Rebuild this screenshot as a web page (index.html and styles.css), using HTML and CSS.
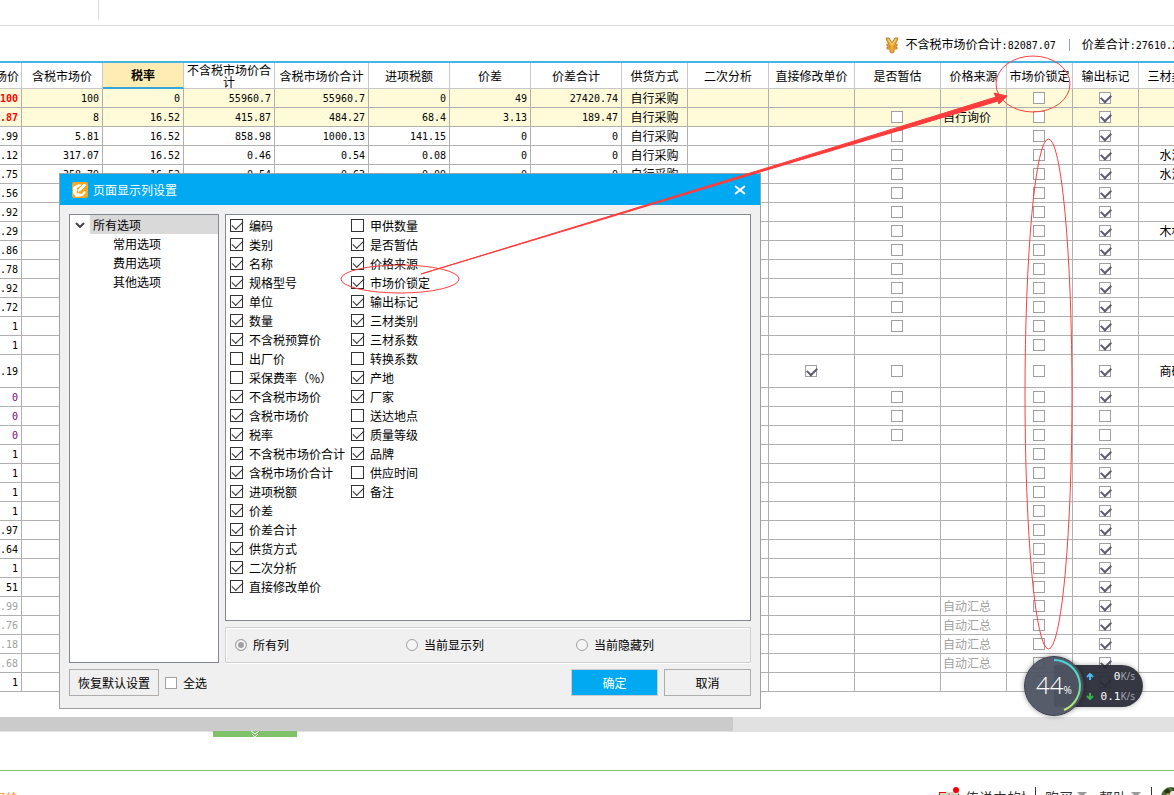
FILE: index.html
```html
<!DOCTYPE html>
<html lang="zh-CN">
<head>
<meta charset="utf-8">
<title>人材机汇总</title>
<link rel="stylesheet" href="styles.css">
</head>
<body>
<div class="app">
  <div class="tabstrip"><span class="tabstrip-divider"></span></div>

  <div class="summary">
    <svg class="coin" viewBox="0 0 14 17" aria-hidden="true">
      <path d="M1 1h3l3 5 3-5h3l-1 3-2 3h2v2H9v1h3v2H9v3l-2 1-2-1v-3H2v-2h3V9H2V7h2L2 4z" fill="#f3a83a" stroke="#c98022" stroke-width="1"/>
      <path d="M3 2l4 6 4-6" fill="none" stroke="#ffe08a" stroke-width="1"/>
    </svg>
    <span>不含税市场价合计<span class="num">:82087.07</span></span>
    <span class="summary-divider"></span>
    <span>价差合计<span class="num">:27610.21</span></span>
  </div>

  <div class="grid-view">
    <table class="grid">
      <colgroup>
        <col class="w81"><col class="w81"><col class="w81"><col class="w91"><col class="w94"><col class="w81"><col class="w81"><col class="w91"><col class="w66"><col class="w81"><col class="w86"><col class="w86"><col class="w66"><col class="w66"><col class="w66"><col class="w66">
      </colgroup>
      <thead>
        <tr>
          <th class="first">不含税市场价</th><th>含税市场价</th><th class="active">税率</th><th>不含税市场价合计</th><th>含税市场价合计</th><th>进项税额</th><th>价差</th><th>价差合计</th><th>供货方式</th><th>二次分析</th><th>直接修改单价</th><th>是否暂估</th><th>价格来源</th><th>市场价锁定</th><th>输出标记</th><th>三材类别</th>
        </tr>
      </thead>
      <tbody id="rows"></tbody>
    </table>
  </div>

  <div class="scrollbar"><div class="scrollbar-thumb"></div></div>
  <button class="expander" type="button" aria-label="展开">
    <svg viewBox="0 0 10 6" aria-hidden="true"><path d="M1 0l4 3 4-3M2 3l3 3 3-3" fill="none" stroke="#fff" stroke-width="1"/></svg>
  </button>

  <footer class="statusbar">
    <a class="inquiry" href="#">询价</a>
    <div class="user-area">
      <svg class="book" viewBox="0 0 20 16" aria-hidden="true">
        <path d="M0 5h9l1 1 1-1h9v11H0z" fill="#d8d3c6"/>
        <path d="M0 5h1v11H0zM19 7h1v9h-1zM0 5h7v1H0z" fill="#f00"/>
        <path d="M10 6v10" stroke="#8f8a80"/>
        <circle cx="17" cy="3" r="3" fill="#f00"/>
      </svg>
      <span class="user-name">传说中的情</span>
      <span class="bar"></span>
      <a class="menu" href="#">购买<span class="caret"></span></a>
      <a class="menu" href="#">帮助<span class="caret"></span></a>
      <span class="bar"></span>
      <svg class="avatar" viewBox="0 0 20 20" aria-hidden="true">
        <circle cx="10" cy="10" r="10" fill="#4f6b35"/>
        <path d="M3 4l4-3 2 4-3 3zM11 1l5 1-2 4zM2 9l4-1 1 4z" fill="#253417"/>
        <circle cx="12" cy="7" r="3" fill="#f0e3dc"/><path d="M9 11h7v8H9z" fill="#e8e2e0"/><circle cx="7" cy="8" r="2" fill="#b98f5a"/>
      </svg>
    </div>
  </footer>
</div>

<section class="dialog" role="dialog" aria-labelledby="dialog-title">
  <header class="dialog-title">
    <svg class="dialog-icon" viewBox="0 0 16 16" aria-hidden="true">
      <rect width="16" height="16" rx="2" fill="#f9a825"/>
      <path d="M1 5l6-3 3 1-5 3v5l5 1 2-3 2 1-3 4-7 1-3-4z" fill="#fff"/>
      <path d="M5 11l1-4 6-6 3 2-6 6z" fill="#fff" stroke="#f9a825" stroke-width="1"/>
    </svg>
    <span id="dialog-title">页面显示列设置</span>
    <button class="close" type="button" aria-label="关闭">
      <svg viewBox="0 0 12 10" aria-hidden="true"><path d="M1 1l10 8M11 1L1 9" stroke="#fff" stroke-width="2"/></svg>
    </button>
  </header>
  <div class="dialog-body">
    <ul class="tree">
      <li>
        <svg class="chevron" viewBox="0 0 10 6" aria-hidden="true"><path d="M1 1l4 4 4-4" fill="none" stroke="#444" stroke-width="2"/></svg>
        <span class="tree-node selected">所有选项</span>
        <ul class="tree-children">
          <li>常用选项</li>
          <li>费用选项</li>
          <li>其他选项</li>
        </ul>
      </li>
    </ul>
    <div class="side">
      <div class="options" id="options"></div>
      <div class="filters">
        <label><input type="radio" name="filter" checked>所有列</label>
        <label><input type="radio" name="filter">当前显示列</label>
        <label><input type="radio" name="filter">当前隐藏列</label>
      </div>
    </div>
  </div>
  <div class="dialog-actions">
    <button class="btn reset" type="button">恢复默认设置</button>
    <label class="select-all"><input class="cell-check" type="checkbox">全选</label>
    <button class="btn primary" type="button">确定</button>
    <button class="btn" type="button">取消</button>
  </div>
</section>

<svg class="marks" width="1174" height="795" viewBox="0 0 1174 795" aria-hidden="true">
  <g fill="none" stroke="#ff4040" stroke-width="1">
    <ellipse cx="1033" cy="84" rx="37" ry="28"/>
    <ellipse cx="1048.500" cy="394" rx="23.500" ry="255"/>
    <ellipse cx="400" cy="279" rx="59" ry="14"/>
  </g>
  <path d="M421 274L760 170 996 97 994 93 1007 96 999 104 998 101 760 172z" fill="#ff3b3b" stroke="#ff3b3b" stroke-width="1"/>
</svg>

<aside class="monitor">
  <div class="gauge">
    <svg class="gauge-arc" viewBox="0 0 60 60" aria-hidden="true">
      <defs><linearGradient id="arc" x1="0" y1="0" x2="0" y2="1"><stop offset="0" stop-color="#45d6e0"/><stop offset=".5" stop-color="#57dfb0"/><stop offset="1" stop-color="#c6e860"/></linearGradient></defs>
      <path d="M30 4a26 26 0 0 1 10 50" fill="none" stroke="url(#arc)" stroke-width="2"/>
    </svg>
    <span class="gauge-value">44</span><span class="gauge-unit">%</span>
  </div>
  <div class="speeds">
    <div class="speed"><svg viewBox="0 0 8 7" aria-hidden="true"><path d="M4 7V2M1 4l3-3 3 3" fill="none" stroke="#4cb8f5" stroke-width="2"/></svg><b>0</b><small>K/s</small></div>
    <div class="speed"><svg viewBox="0 0 8 7" aria-hidden="true"><path d="M4 0v5M1 3l3 3 3-3" fill="none" stroke="#36b54a" stroke-width="2"/></svg><b>0.1</b><small>K/s</small></div>
  </div>
</aside>
<script src="app.js"></script>
</body>
</html>
```
FILE: styles.css
```css
* { box-sizing: border-box; }

body {
  margin: 0;
  height: 100vh;
  overflow: hidden;
  position: relative;
  background: #fff;
  color: #000;
  font: 12px/18px "Noto Sans CJK SC", sans-serif;
}

button, input { font: inherit; margin: 0; }
ul { list-style: none; margin: 0; padding: 0; }
a { color: inherit; text-decoration: none; }

.app { display: flex; flex-direction: column; height: 100%; overflow: hidden; }

.tabstrip { flex: none; height: 26px; padding-left: 98px; border-bottom: 1px solid #dcdcdc; }
.tabstrip-divider { display: block; width: 1px; height: 20px; background: #dcdcdc; }

.summary {
  flex: none;
  display: flex;
  align-items: center;
  justify-content: flex-end;
  height: 35px;
  margin-right: -10px;
  padding-top: 3px;
  white-space: nowrap;
}
.coin { width: 14px; height: 17px; margin-right: 7px; }
.summary-divider { width: 1px; height: 12px; margin: 0 12px 0 13px; background: #8aa0bd; }

.num { font-family: "DejaVu Sans Mono", monospace; font-size: 10px; }

.grid-view { flex: none; overflow: hidden; border-top: 2px solid #45b5e6; }
.grid {
  width: 1264px;
  margin-left: -59px;
  table-layout: fixed;
  border-spacing: 0;
}
.w66 { width: 66px; }
.w81 { width: 81px; }
.w86 { width: 86px; }
.w91 { width: 91px; }
.w94 { width: 94px; }

.grid th {
  height: 26px;
  padding: 0 2px;
  border-right: 1px solid #c8c8c8;
  border-bottom: 1px solid #c8c8c8;
  font-weight: 400;
  line-height: 12px;
}
.grid th.first { text-align: right; }
.grid th:nth-child(14) { white-space: nowrap; }
.grid th.active { background: #ffecb3; border-bottom: 2px solid #35a6dc; font-weight: 700; }

.grid td {
  height: 19px;
  padding: 0 3px;
  border-right: 1px solid #b0b0b0;
  border-bottom: 1px solid #b0b0b0;
  line-height: 18px;
  text-align: center;
  white-space: nowrap;
}
.grid td.num { padding-top: 2px; line-height: 16px; text-align: right; }
.grid td.check { padding-right: 4px; }
.grid td:nth-child(13) { padding-left: 2px; text-align: left; }
.grid tr.tall td { height: 33px; }
.grid tr.lit td { background: #fffbd8; }
.grid tr.lit td:first-child { color: #f00; font-weight: 700; }
.grid tr.zero td { color: #800080; }
.grid tr.auto td { color: #a0a0a0; }

.cell-check {
  appearance: none;
  display: block;
  position: relative;
  width: 12px;
  height: 12px;
  margin: 0 auto;
  border: 1px solid #a0a0a0;
  background: #fff;
}
.cell-check:checked::before, .option input:checked::before {
  content: "";
  position: absolute;
  left: 1px;
  top: 1px;
  width: 8px;
  height: 5px;
  border: solid #5c5c70;
  border-width: 0 0 2px 2px;
  transform: rotate(-45deg);
}

.scrollbar { flex: none; height: 15px; margin-top: 25px; background: #e1e1e1; }
.scrollbar-thumb { width: 62.4%; height: 14px; background: #cbcbcb; }

.expander {
  flex: none;
  display: flex;
  justify-content: center;
  width: 84px;
  height: 6px;
  margin-top: -1px;
  margin-left: 213px;
  padding: 0;
  border: 0;
  background: #80c26a;
}
.expander svg { width: 10px; height: 6px; }

.statusbar {
  flex: none;
  display: flex;
  justify-content: space-between;
  height: 60px;
  margin-top: 33px;
  padding-top: 16px;
  border-top: 1px solid #80c26a;
  color: #333;
  font-size: 14px;
  line-height: 20px;
}
.inquiry { margin-left: -9px; color: #ff9a3c; }
.user-area { display: flex; align-items: flex-start; margin-right: -7px; }
.book { width: 20px; height: 16px; margin-right: 6px; }
.user-name { width: 60px; overflow: hidden; white-space: nowrap; }
.bar { width: 1px; height: 20px; margin: 0 9px 0 10px; background: #333; }
.menu { display: flex; margin-right: 12px; }
.menu:nth-of-type(2) { margin-right: 0; }
.caret { margin: 5px 0 0 4px; border: solid transparent; border-width: 5px 5px 0; border-top-color: #999; height: 0; }
.avatar { width: 20px; height: 20px; }

.dialog {
  position: absolute;
  left: 59px;
  top: 173px;
  width: 702px;
  border: 1px solid #a0a0a0;
  background: #f0f0f0;
}
.dialog-title {
  display: flex;
  align-items: center;
  height: 31px;
  padding: 0 14px 0 12px;
  background: #00a9f2;
  color: #fff;
}
.dialog-icon { width: 16px; height: 16px; margin-right: 5px; }
.close { margin-left: auto; padding: 0; border: 0; background: none; display: flex; }
.close svg { width: 12px; height: 10px; }

.dialog-body { display: grid; grid-template-columns: 150px 1fr; gap: 6px; padding: 9px 9px 6px; }
.tree { min-height: 449px; border: 1px solid #828790; background: #fff; line-height: 19px; }
.tree > li { display: grid; grid-template-columns: 20px 1fr; align-items: center; }
.chevron { width: 10px; height: 6px; margin-left: 5px; }
.tree-node { padding-left: 3px; }
.tree-node.selected { background: #d9d9d9; }
.tree-children { grid-column: 2; padding-left: 23px; }

.side { display: flex; flex-direction: column; gap: 6px; }
.options {
  flex: 1;
  display: grid;
  grid-template-rows: repeat(20, 19px);
  grid-auto-columns: 121px;
  grid-auto-flow: column;
  padding: 1px 4px;
  border: 1px solid #828790;
  background: #fff;
}
.option { display: flex; align-items: center; white-space: nowrap; }
.option input {
  appearance: none;
  flex: none;
  position: relative;
  width: 13px;
  height: 13px;
  margin-right: 6px;
  border: 1px solid #333;
  background: #fff;
}
.option input:checked::before { width: 10px; height: 5px; border-color: #333; border-width: 0 0 1px 1px; }

.filters {
  display: grid;
  grid-template-columns: 171px 170px 1fr;
  height: 36px;
  padding-left: 9px;
  border: 1px solid #d0d0d0;
  box-shadow: inset 1px 1px #fff, 0 1px #fff;
}
.filters label { display: flex; align-items: center; }
.filters input {
  appearance: none;
  width: 12px;
  height: 12px;
  margin-right: 6px;
  border: 1px solid #a0a0a0;
  border-radius: 50%;
  background: #f4f4f4;
}
.filters input:checked { background: #a0a0a0; box-shadow: inset 0 0 0 2px #f4f4f4; }

.dialog-actions { display: flex; gap: 6px; padding: 0 9px 12px; }
.btn { width: 87px; height: 27px; padding: 0; border: 1px solid #adadad; background: #f0f0f0; color: #000; }
.btn.reset { width: 90px; }
.btn.primary { margin-left: auto; border-color: #ccc; background: #00a9f2; color: #fff; }
.select-all { display: flex; align-items: center; gap: 6px; }

.marks { position: absolute; left: 0; top: 0; pointer-events: none; }

.monitor { position: absolute; left: 1024px; top: 656px; display: flex; align-items: center; }
.gauge {
  position: relative;
  z-index: 1;
  display: flex;
  align-items: baseline;
  width: 60px;
  height: 60px;
  padding: 13px 0 0 11px;
  border: 1px solid #3c404a;
  border-radius: 50%;
  background: rgba(78, 83, 98, 0.95);
  box-shadow: 0 0 5px rgba(0, 0, 0, 0.4);
  color: #fff;
  line-height: 30px;
}
.gauge-arc { position: absolute; left: -1px; top: -1px; width: 60px; height: 60px; }
.gauge-value { font-family: "Open Sans", sans-serif; font-size: 24px; font-weight: 300; }
.gauge-unit { font-family: "Open Sans", sans-serif; font-size: 10px; }
.speeds {
  width: 89px;
  margin-left: -30px;
  padding: 1px 8px 1px 32px;
  border-radius: 0 21px 21px 0;
  background: rgba(40, 44, 54, 0.94);
  box-shadow: 0 0 5px rgba(0, 0, 0, 0.3);
  color: #fff;
}
.speed { display: flex; align-items: baseline; height: 20px; line-height: 20px; }
.speed svg { width: 8px; height: 7px; margin-right: auto; }
.speed b { font: 11px/20px "DejaVu Sans Mono", monospace; }
.speed small { font: 10px/20px "Open Sans", sans-serif; color: #a8abb3; }
```
FILE: app.js
```js
// v holds the numeric columns; est, edit and out are check states: 1 ticked, 0 empty, absent for none.
const supply = "自行采购";
const data = [
  { v: ["100", "100", "0", "55960.7", "55960.7", "0", "49", "27420.74"], s: supply, est: null, cls: "lit" },
  { v: ["7.87", "8", "16.52", "415.87", "484.27", "68.4", "3.13", "189.47"], s: supply, est: 0, src: "自行询价", cls: "lit" },
  { v: ["4.99", "5.81", "16.52", "858.98", "1000.13", "141.15", "0", "0"], s: supply, est: 0 },
  { v: ["272.12", "317.07", "16.52", "0.46", "0.54", "0.08", "0", "0"], s: supply, est: 0, mat: "水泥" },
  { v: ["307.75", "358.79", "16.52", "0.54", "0.63", "0.09", "0", "0"], s: supply, est: 0, mat: "水泥" },
  { v: [".56"], est: 0 },
  { v: [".92"], est: 0 },
  { v: [".29"], est: 0, mat: "木材" },
  { v: [".86"], est: 0 },
  { v: [".78"], est: 0 },
  { v: [".92"], est: 0 },
  { v: [".72"], est: 0 },
  { v: ["1"], est: 0 },
  { v: ["1"] },
  { v: [".19"], edit: 1, est: 0, mat: "商砼", cls: "tall" },
  { v: ["0"], est: 0, cls: "zero" },
  { v: ["0"], est: 0, out: 0, cls: "zero" },
  { v: ["0"], est: 0, out: 0, cls: "zero" },
  { v: ["1"] },
  { v: ["1"] },
  { v: ["1"] },
  { v: ["1"] },
  { v: [".97"] },
  { v: [".64"] },
  { v: ["1"] },
  { v: ["51"] },
  { v: [".99"], src: "自动汇总", cls: "auto" },
  { v: [".76"], src: "自动汇总", cls: "auto" },
  { v: [".18"], src: "自动汇总", cls: "auto" },
  { v: [".68"], src: "自动汇总", cls: "auto" },
  { v: ["1"] }
];

function check(state, label) {
  if (state == null) return "<td></td>";
  return `<td class="check"><input class="cell-check" type="checkbox" aria-label="${label}"${state ? " checked" : ""}></td>`;
}

document.getElementById("rows").innerHTML = data.map(r => {
  let cells = "";
  for (let i = 0; i < 8; i++) cells += `<td class="num">${r.v[i] || ""}</td>`;
  cells += `<td>${r.s || ""}</td><td></td>`;
  cells += check(r.edit, "直接修改单价") + check(r.est, "是否暂估");
  cells += `<td>${r.src || ""}</td>`;
  cells += check(0, "市场价锁定") + check(r.out ?? 1, "输出标记");
  cells += `<td>${r.mat || ""}</td>`;
  return `<tr class="${r.cls || ""}">${cells}</tr>`;
}).join("");

// A leading minus marks a column that is not shown.
const options = [
  "编码", "类别", "名称", "规格型号", "单位", "数量", "不含税预算价", "-出厂价", "-采保费率（%）",
  "不含税市场价", "含税市场价", "税率", "不含税市场价合计", "含税市场价合计", "进项税额", "价差",
  "价差合计", "供货方式", "二次分析", "直接修改单价",
  "-甲供数量", "是否暂估", "价格来源", "市场价锁定", "输出标记", "三材类别", "三材系数", "-转换系数",
  "产地", "厂家", "-送达地点", "质量等级", "品牌", "-供应时间", "备注"
];

document.getElementById("options").innerHTML = options.map(name => {
  const off = name.startsWith("-");
  return `<label class="option"><input type="checkbox"${off ? "" : " checked"}>${off ? name.slice(1) : name}</label>`;
}).join("");
```
